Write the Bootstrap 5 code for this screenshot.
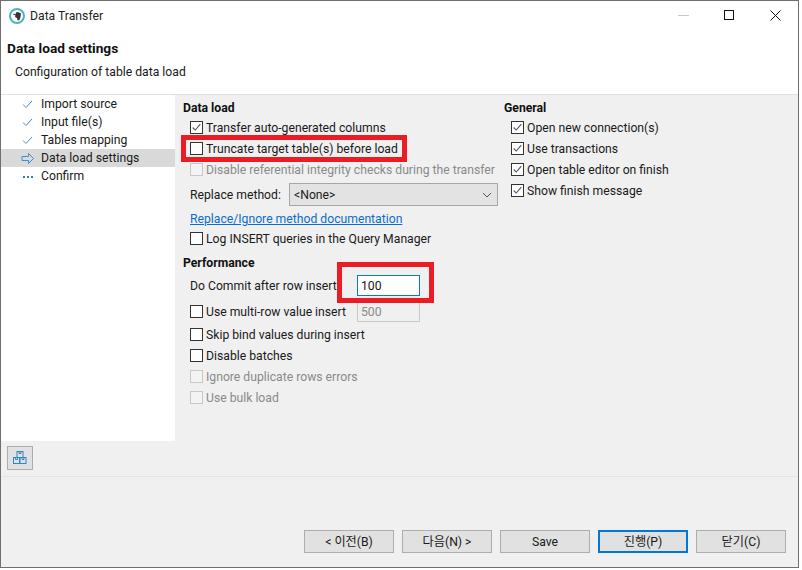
<!DOCTYPE html>
<html lang="en">
<head>
<meta charset="utf-8">
<title>Data Transfer</title>
<link href="https://cdn.jsdelivr.net/npm/bootstrap@5.3.0/dist/css/bootstrap.min.css" rel="stylesheet">
<style>
html,body{margin:0;padding:0;height:570px;overflow:hidden;background:#fff;}
body{font-family:Roboto,"Noto Sans CJK KR",sans-serif;font-size:12.2px;line-height:16px;color:#1a1a1a;}
.win{width:799px;height:568px;border:1px solid #6f6f6f;background:#f0f0f0;position:relative;}
.titlebar{height:31px;background:#fff;padding:0 0 2px 8px;}
.wintitle{margin-left:5px;color:#222;}
.winctl{width:46px;height:29px;}
.hdr{height:63px;background:#fff;border-bottom:1px solid #e0e0e0;}
.hdr-t{font-weight:700;font-size:13.7px;padding:8px 0 0 6px;color:#111;}
.hdr-s{padding:8px 0 0 14px;}
.bodyarea{height:346px;}
.steps{width:174px;background:#fff;}
.step{height:18px;padding-left:20px;gap:7px;}
.step svg{flex:none;}
.step-on{background:#d9d9d9;}
.form-l{width:329px;padding:5px 0 0 8px;}
.form-r{padding:5px 0 0 0;}
.grp{font-weight:700;height:17px;color:#111;}
.grp-gap{margin-top:6px;}
.opt{height:21px;padding-left:7px;gap:3px;white-space:nowrap;}
.opt-short{height:20px;padding-top:2px;}
.row-a{margin-top:4px;}
.row-b{margin-top:3px;}
.row-c{margin-top:5px;}
.row-d{margin-top:2px;}
.cb{width:13px;height:13px;border:1px solid #333;background:#fff;flex:none;display:block;}
.cb-off{border-color:#c8c8c8;background:#f3f3f3;}
.muted{color:#8a8a8a;}
.lbl-a{width:96px;flex:none;}
.lbl-b{width:164px;flex:none;}
.lbl-c{width:148px;flex:none;}
.sel{width:209px;height:23px;border:1px solid #a6a6a6;background:#e3e3e3;padding:0 5px 0 4px;}
.doc{color:#0a6ed1;text-decoration:underline;}
.num{width:63px;height:21px;border:1px solid #0a78d2;background:#fff;padding:2px 3px 0;}
.num-off{width:63px;height:21px;border:1px solid #c8c8c8;background:#f0f0f0;color:#8a8a8a;padding:2px 3px 0;}
.tools{height:36px;border-bottom:1px solid #e3e3e3;padding:5px 0 0 6px;}
.pkg{width:26px;height:24px;border:1px solid #adadad;background:#e1e1e1;padding:0;}
.foot{height:90px;padding:53px 0 0 303px;gap:8px;}
.wbtn{width:90px;height:23px;border:1px solid #adadad;background:#e1e1e1;color:#1a1a1a;font-size:12.2px;line-height:16px;padding:0;border-radius:0;}
.wbtn-def{border:2px solid #0078d7;}
.redbox{position:absolute;border:5px solid #ec1c24;}
.rb-a{left:180px;top:134px;width:226px;height:27px;}
.rb-b{left:336px;top:261px;width:97px;height:41px;}
</style>
</head>
<body>
<div class="win">
  <div class="titlebar d-flex align-items-center">
    <svg width="16" height="16" viewBox="0 0 16 16" aria-hidden="true"><circle cx="8" cy="8" r="7" fill="#fff" stroke="#4bb4c0" stroke-width="2"/><path d="M4 6.500l1-1 1.500 1 .5-2 2-.5 3 1.500-.5 3.500-1 3-2 .5-.5-2.500-2-1 .5-1.500z" fill="#333"/></svg>
    <span class="wintitle flex-grow-1">Data Transfer</span>
    <div class="winctl d-flex align-items-center justify-content-center"><svg width="11" height="11" viewBox="0 0 11 11" aria-hidden="true"><path d="M0 5.500h11" stroke="#c8c8c8"/></svg></div>
    <div class="winctl d-flex align-items-center justify-content-center"><svg width="11" height="11" viewBox="0 0 11 11" aria-hidden="true"><rect x=".5" y=".5" width="9" height="9" fill="none" stroke="#111"/></svg></div>
    <div class="winctl d-flex align-items-center justify-content-center"><svg width="11" height="11" viewBox="0 0 11 11" aria-hidden="true"><path d="M.5.500l10 10M10.500.500l-10 10" stroke="#111"/></svg></div>
  </div>
  <div class="hdr">
    <div class="hdr-t">Data load settings</div>
    <div class="hdr-s">Configuration of table data load</div>
  </div>
  <div class="bodyarea d-flex">
    <div class="steps">
      <div class="step d-flex align-items-center"><svg width="13" height="13" viewBox="0 0 13 13" aria-hidden="true"><path d="M2 6.500l3 3 6-6.500" fill="none" stroke="#4a90c8"/></svg><span>Import source</span></div>
      <div class="step d-flex align-items-center"><svg width="13" height="13" viewBox="0 0 13 13" aria-hidden="true"><path d="M2 6.500l3 3 6-6.500" fill="none" stroke="#4a90c8"/></svg><span>Input file(s)</span></div>
      <div class="step d-flex align-items-center"><svg width="13" height="13" viewBox="0 0 13 13" aria-hidden="true"><path d="M2 6.500l3 3 6-6.500" fill="none" stroke="#4a90c8"/></svg><span>Tables mapping</span></div>
      <div class="step step-on d-flex align-items-center"><svg width="13" height="13" viewBox="0 0 13 13" aria-hidden="true"><path d="M1 4.500h6.500V1.500l5 5-5 5V8.500H1z" fill="none" stroke="#3f8fd0"/></svg><span>Data load settings</span></div>
      <div class="step d-flex align-items-center"><svg width="13" height="13" viewBox="0 0 13 13" aria-hidden="true"><path d="M2 7h2M6 7h2M10 7h2" stroke="#2f7fc0" stroke-width="2"/></svg><span>Confirm</span></div>
    </div>
    <div class="form-l">
      <div class="grp">Data load</div>
      <div class="opt d-flex align-items-center"><svg class="cb" viewBox="0 0 13 13" aria-hidden="true"><path d="M2 6.500l3 3 6-7" fill="none" stroke="#555" stroke-width="1.300"/></svg><span>Transfer auto-generated columns</span></div>
      <div class="opt d-flex align-items-center"><span class="cb"></span><span>Truncate target table(s) before load</span></div>
      <div class="opt d-flex align-items-center"><span class="cb cb-off"></span><span class="muted">Disable referential integrity checks during the transfer</span></div>
      <div class="opt row-a d-flex align-items-center"><span class="lbl-a">Replace method:</span><div class="sel d-flex align-items-center justify-content-between"><span>&lt;None&gt;</span><svg width="10" height="6" viewBox="0 0 10 6" aria-hidden="true"><path d="M1 1l4 4 4-4" fill="none" stroke="#555"/></svg></div></div>
      <div class="opt opt-short row-b d-flex align-items-center"><span class="doc">Replace/Ignore method documentation</span></div>
      <div class="opt d-flex align-items-center"><span class="cb"></span><span>Log INSERT queries in the Query Manager</span></div>
      <div class="grp grp-gap">Performance</div>
      <div class="opt row-b d-flex align-items-center"><span class="lbl-b">Do Commit after row insert</span><div class="num">100</div></div>
      <div class="opt row-c d-flex align-items-center"><span class="cb"></span><span class="lbl-c">Use multi-row value insert</span><div class="num-off">500</div></div>
      <div class="opt row-d d-flex align-items-center"><span class="cb"></span><span>Skip bind values during insert</span></div>
      <div class="opt d-flex align-items-center"><span class="cb"></span><span>Disable batches</span></div>
      <div class="opt d-flex align-items-center"><span class="cb cb-off"></span><span class="muted">Ignore duplicate rows errors</span></div>
      <div class="opt d-flex align-items-center"><span class="cb cb-off"></span><span class="muted">Use bulk load</span></div>
    </div>
    <div class="form-r">
      <div class="grp">General</div>
      <div class="opt d-flex align-items-center"><svg class="cb" viewBox="0 0 13 13" aria-hidden="true"><path d="M2 6.500l3 3 6-7" fill="none" stroke="#555" stroke-width="1.300"/></svg><span>Open new connection(s)</span></div>
      <div class="opt d-flex align-items-center"><svg class="cb" viewBox="0 0 13 13" aria-hidden="true"><path d="M2 6.500l3 3 6-7" fill="none" stroke="#555" stroke-width="1.300"/></svg><span>Use transactions</span></div>
      <div class="opt d-flex align-items-center"><svg class="cb" viewBox="0 0 13 13" aria-hidden="true"><path d="M2 6.500l3 3 6-7" fill="none" stroke="#555" stroke-width="1.300"/></svg><span>Open table editor on finish</span></div>
      <div class="opt d-flex align-items-center"><svg class="cb" viewBox="0 0 13 13" aria-hidden="true"><path d="M2 6.500l3 3 6-7" fill="none" stroke="#555" stroke-width="1.300"/></svg><span>Show finish message</span></div>
    </div>
  </div>
  <div class="tools">
    <button type="button" class="pkg d-flex align-items-center justify-content-center" aria-label="Export"><svg width="14" height="14" viewBox="0 0 14 14" aria-hidden="true"><g fill="none" stroke="#2d87cc"><rect x="4" y=".5" width="6" height="6"/><rect x=".5" y="6.500" width="6" height="6"/><rect x="7" y="6.500" width="6" height="6"/><path d="M6 .5v2h2v-2M2.500 6.500v2h2v-2M9 6.500v2h2v-2"/></g></svg></button>
  </div>
  <div class="foot d-flex">
    <button type="button" class="wbtn">&lt; 이전(B)</button>
    <button type="button" class="wbtn">다음(N) &gt;</button>
    <button type="button" class="wbtn">Save</button>
    <button type="button" class="wbtn wbtn-def">진행(P)</button>
    <button type="button" class="wbtn">닫기(C)</button>
  </div>
  <div class="redbox rb-a"></div>
  <div class="redbox rb-b"></div>
</div>
</body>
</html>
